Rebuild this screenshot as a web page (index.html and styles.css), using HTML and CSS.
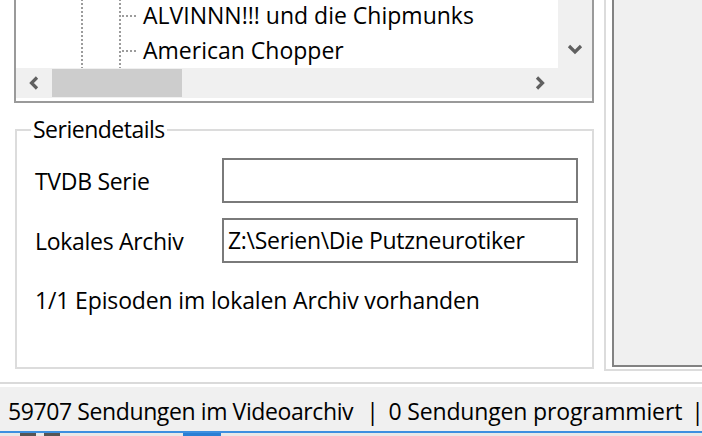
FILE: index.html
```html
<!DOCTYPE html>
<html lang="de">
<head>
<meta charset="utf-8">
<title>Serien</title>
<link rel="stylesheet" href="styles.css">
</head>
<body>
<div class="window">
  <div class="main">
    <div class="left">
      <div class="tree">
        <div class="tree-body">
          <div class="tree-view">
            <div class="row"><span class="indent"></span><span class="guide"></span><span class="branch"></span><span class="label">ALVINNN!!! und die Chipmunks</span></div>
            <div class="row"><span class="indent"></span><span class="guide"></span><span class="branch"></span><span class="label">American Chopper</span></div>
          </div>
          <div class="vscroll">
            <div class="sbtn vbtn">
              <svg width="16" height="12" viewBox="0 0 16 12"><polyline points="2,3 8,9 14,3" fill="none" stroke="#606060" stroke-width="3.2"/></svg>
            </div>
          </div>
        </div>
        <div class="hscroll">
          <div class="sbtn hbtn">
            <svg width="12" height="14" viewBox="0 0 12 14"><polyline points="9,1.5 3.5,7 9,12.5" fill="none" stroke="#606060" stroke-width="3.2"/></svg>
          </div>
          <div class="track"><div class="thumb"></div></div>
          <div class="sbtn hbtn">
            <svg width="12" height="14" viewBox="0 0 12 14"><polyline points="3,1.5 8.5,7 3,12.5" fill="none" stroke="#606060" stroke-width="3.2"/></svg>
          </div>
          <div class="corner"></div>
        </div>
      </div>
      <fieldset class="group">
        <legend>Seriendetails</legend>
        <div class="form">
          <span class="flabel">TVDB Serie</span>
          <div class="textbox"></div>
          <span class="flabel">Lokales Archiv</span>
          <div class="textbox">Z:\Serien\Die Putzneurotiker</div>
        </div>
        <p class="info">1/1 Episoden im lokalen Archiv vorhanden</p>
      </fieldset>
    </div>
    <div class="right"><div class="right-inner"></div></div>
  </div>
  <div class="sep"></div>
  <div class="status">
    <span>59707 Sendungen im Videoarchiv</span><span class="bar">|</span><span class="prog">0 Sendungen programmiert</span><span class="bar bar-end">|</span>
  </div>
  <div class="blue"></div>
  <div class="taskbar">
    <span class="tb tb1"></span><span class="tb tb2"></span><span class="tb tb3"></span>
  </div>
</div>
</body>
</html>
```
FILE: styles.css
```css
* { box-sizing: border-box; }
html, body { margin: 0; padding: 0; }
body {
  width: 702px;
  height: 436px;
  overflow: hidden;
  background: #fff;
  color: #000;
  font-family: "Open Sans", "Noto Sans", "DejaVu Sans", sans-serif;
  font-size: 23px;
}
.window { display: flex; flex-direction: column; height: 436px; }
.main { display: flex; height: 382px; overflow: hidden; background: #fff; }
.left { width: 604px; display: flex; flex-direction: column; padding-left: 14px; }

.tree {
  width: 580px;
  height: 150px;
  margin-top: -47px;
  border: 2px solid #9a9a9a;
  padding-bottom: 3px;
  background: #fff;
  display: flex;
  flex-direction: column;
  flex: none;
}
.tree-body { height: 113px; display: flex; }
.tree-view {
  flex: 1;
  display: flex;
  flex-direction: column;
  justify-content: flex-end;
  overflow: hidden;
  background:
    repeating-linear-gradient(to bottom, #9c9c9c 0 2px, transparent 2px 4px) 65px 0 / 2px 100% no-repeat,
    repeating-linear-gradient(to bottom, #9c9c9c 0 2px, transparent 2px 4px) 103px 0 / 2px 100% no-repeat,
    #fff;
}
.row { display: flex; height: 35px; align-items: center; white-space: nowrap; }
.indent { width: 65px; height: 100%; flex: none; }
.guide { width: 38px; height: 100%; flex: none; }
.branch {
  width: 24px;
  height: 100%;
  flex: none;
  background: repeating-linear-gradient(to right, #9c9c9c 0 2px, transparent 2px 4px) 3px 50% / 14px 2px no-repeat;
}
.label { line-height: 35px; letter-spacing: 0; }

.vscroll {
  width: 34px;
  background: #f0f0f0;
  display: flex;
  flex-direction: column;
  justify-content: flex-end;
}
.sbtn { display: flex; align-items: center; justify-content: center; flex: none; }
.vbtn { height: 38px; }
.hscroll { height: 30px; display: flex; background: #f0f0f0; }
.hbtn { width: 36px; }
.track { flex: 1; padding: 1px 0; }
.thumb { width: 130px; height: 100%; background: #cdcdcd; }
.corner { width: 34px; }

.group {
  margin: 12px 0 0 1px;
  width: 579px;
  border: 2px solid #dcdcdc;
  padding: 0 12px 52px 18px;
  flex: none;
}
.group legend {
  margin-left: -4px;
  padding: 0 2px;
  line-height: 30px;
  letter-spacing: -0.5px;
  position: relative;
  top: -1px;
}
.form {
  margin-top: 13px;
  display: grid;
  grid-template-columns: 187px 356px;
  grid-auto-rows: 45px;
  row-gap: 15px;
  align-items: center;
}
.flabel { letter-spacing: -0.3px; }
.textbox {
  height: 45px;
  border: 2px solid #7a7a7a;
  padding-left: 4px;
  line-height: 41px;
  white-space: nowrap;
  letter-spacing: -0.3px;
}
.info { margin: 22px 0 0 0; line-height: 30px; letter-spacing: -0.15px; }

.right {
  flex: 1;
  height: 371px;
  border-left: 2px solid #dcdcdc;
  border-bottom: 2px solid #dcdcdc;
  padding: 0 0 2px 6px;
  background: #fff;
}
.right-inner {
  height: 100%;
  border-left: 2px solid #828282;
  border-bottom: 2px solid #828282;
  background: #f0f0f0;
}

.sep { height: 2px; background: #dadada; flex: none; }
.status {
  margin-top: 3px;
  height: 44px;
  padding: 3px 0 0 8px;
  line-height: 42px;
  background: #f0f0f0;
  white-space: nowrap;
  letter-spacing: -0.4px;
  flex: none;
}
.prog { letter-spacing: -0.15px; }
.bar { margin: 0 10px 0 13px; }
.bar.bar-end { margin: 0 0 0 9px; }
.blue { height: 2px; background: #3d8fe0; flex: none; }
.taskbar { flex: 1; background: #e8e8e8; display: flex; }
.tb { height: 100%; display: block; }
.tb1 { width: 16px; margin-left: 20px; background: #555; }
.tb2 { width: 16px; margin-left: 8px; background: #555; }
.tb3 { width: 38px; margin-left: 123px; background: #2a7fd4; }
```
